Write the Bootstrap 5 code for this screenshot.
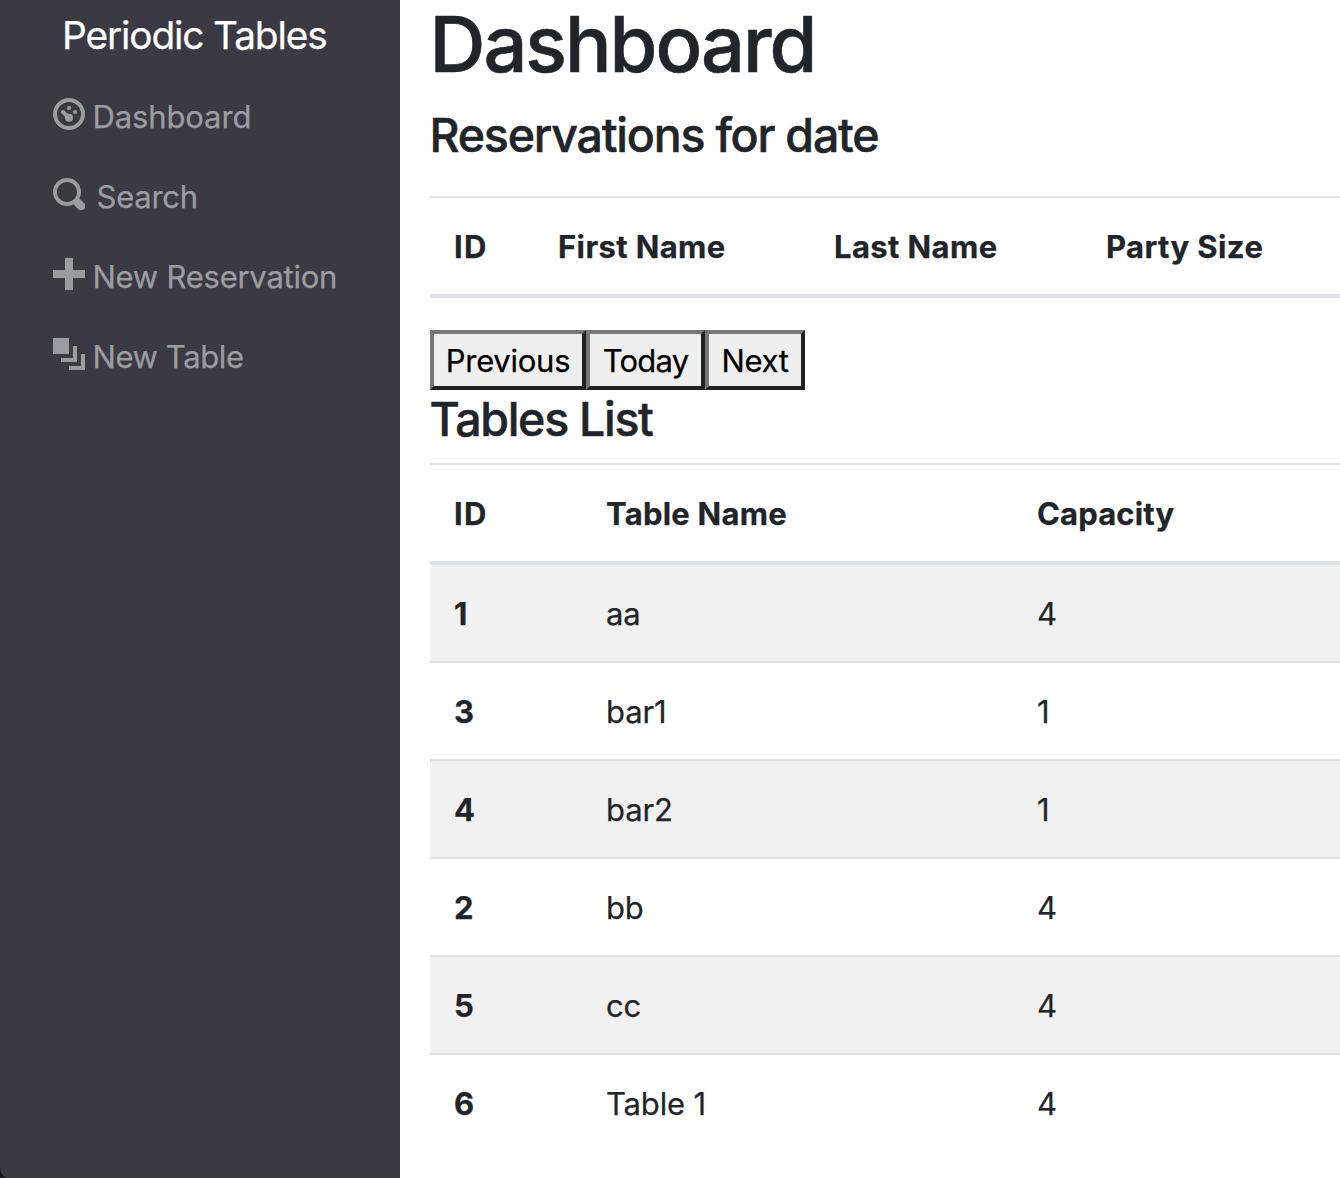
<!DOCTYPE html>
<html lang="en">
<head>
<meta charset="utf-8">
<meta name="viewport" content="width=device-width, initial-scale=1">
<title>Periodic Tables</title>
<link href="https://cdn.jsdelivr.net/npm/bootstrap@5.3.0/dist/css/bootstrap.min.css" rel="stylesheet">
<style>
html{font-size:32px}
body{font-family:Inter,"Liberation Sans",sans-serif;font-size:31px;line-height:48px;color:#212529;height:1178px;background:#fff;-webkit-text-stroke:.25px currentColor}
.side-wrap{width:400px;background:#151517}
.side-nav{background:#3b3a44;border-bottom-left-radius:7px 11px;height:1178px}
.brand-text{font-size:38.8px;line-height:60px;letter-spacing:-1.13px;padding:5px 0 0 62px;margin-bottom:1px;color:#fff;text-decoration:none;white-space:nowrap}
.side-links{padding:19px 0 0 52px}
.side-links .nav-link{height:80px;padding:8px 0 0;line-height:48px;color:#9b9ca1;white-space:nowrap;letter-spacing:-.25px;font-size:31px}
.side-links svg{width:32px;height:32px;flex:none;margin:5px 7px 0 .5px}
.side-links span{padding-left:1px}
.side-links .ls-dash{letter-spacing:-.12px}
.side-links .ls-search{letter-spacing:-.24px;padding-left:5px}
.side-links .ls-table{letter-spacing:-.4px}
.page{padding-left:30px;width:940px;height:1178px;overflow:hidden}
h1.title{font-size:77.5px;line-height:88px;font-weight:500;letter-spacing:-2.05px;margin:0 0 19px -.5px;-webkit-text-stroke:.6px currentColor}
h2.sub{font-size:46.5px;line-height:57.6px;font-weight:500;letter-spacing:-1.22px;margin:0 0 31.4px -.5px;-webkit-text-stroke:.5px currentColor}
h2.sub.list-title{letter-spacing:-1.3px;margin:0 0 14.4px -.5px;padding-top:1px}
.grid-table{border-collapse:separate;border-spacing:0;table-layout:fixed;width:1200px;margin:0 0 32px}
.grid-table th,.grid-table td{padding:25px 24px 23px;height:98px;border:0;border-top:2px solid #dee2e6;line-height:48px;box-shadow:none;white-space:nowrap;background:transparent}
.grid-table td{letter-spacing:-.15px}
.grid-table thead th{height:102px;border-bottom:4px solid #dee2e6;letter-spacing:.4px}
.grid-table tbody tr:first-child>*{border-top:0;height:96px}
.grid-table tbody tr:nth-child(odd)>*{background:#f1f1f1}
.grid-table thead th.ls-id{letter-spacing:1.2px}
.grid-table thead th.ls-name{letter-spacing:.24px}
.grid-table thead th.ls-cap{letter-spacing:.14px}
.raised{font-size:31px;line-height:48px;height:60px;padding:3px 0 1px;border:4px solid;border-color:#767676 #1f2121 #1f2121 #767676;background:#efefef;color:#000;text-align:center}
.raised.prev{width:156px;letter-spacing:-.25px}
.raised.today{width:119px;letter-spacing:-.8px}
.raised.next{width:100px;letter-spacing:-.3px}
</style>
</head>
<body class="overflow-hidden">
<div class="d-flex">
  <div class="side-wrap flex-shrink-0">
    <nav class="side-nav d-flex flex-column">
      <a class="brand-text d-block" href="#">Periodic Tables</a>
      <ul class="nav flex-column flex-nowrap side-links">
        <li class="nav-item"><a class="nav-link d-flex align-items-start" href="#">
          <svg viewBox="0 0 8 8" fill="currentColor" aria-hidden="true"><circle cx="4" cy="4" r="3.5" fill="none" stroke="currentColor"/><circle cx="4" cy="2.5" r=".5"/><circle cx="5.5" cy="3.5" r=".5"/><circle cx="4" cy="4.95" r="1"/><path d="M2.5 3.5L3.8 4.8" fill="none" stroke="currentColor" stroke-linecap="round"/></svg>
          <span class="ls-dash">Dashboard</span></a></li>
        <li class="nav-item"><a class="nav-link d-flex align-items-start" href="#">
          <svg viewBox="0 0 8 8" fill="currentColor" aria-hidden="true"><path d="M3.5 0c-1.93 0-3.5 1.57-3.5 3.5s1.57 3.5 3.5 3.5c.59 0 1.17-.14 1.66-.41a1 1 0 0 0 .13.13l1 1a1.02 1.02 0 1 0 1.44-1.44l-1-1a1 1 0 0 0-.16-.13c.27-.49.44-1.06.44-1.66 0-1.93-1.55-3.5-3.5-3.5zm0 1c1.39 0 2.5 1.11 2.5 2.5 0 .66-.24 1.27-.66 1.72-.01.01-.02.02-.03.03a1 1 0 0 0-.13.13c-.44.4-1.04.63-1.69.63-1.39 0-2.5-1.11-2.5-2.5s1.11-2.5 2.5-2.5z"/></svg>
          <span class="ls-search">Search</span></a></li>
        <li class="nav-item"><a class="nav-link d-flex align-items-start" href="#">
          <svg viewBox="0 0 8 8" fill="currentColor" aria-hidden="true"><path d="M3 0v3h-3v2h3v3h2v-3h3v-2h-3v-3h-2z"/></svg>
          <span>New Reservation</span></a></li>
        <li class="nav-item"><a class="nav-link d-flex align-items-start" href="#">
          <svg viewBox="0 0 8 8" fill="currentColor" aria-hidden="true"><path d="M0 0v4h4v-4h-4zm5 2v3h-3v1h4v-4h-1zm2 2v3h-3v1h4v-4h-1z"/></svg>
          <span class="ls-table">New Table</span></a></li>
      </ul>
    </nav>
  </div>
  <main class="page flex-shrink-0">
    <h1 class="title">Dashboard</h1>
    <h2 class="sub">Reservations for date</h2>
    <table class="table grid-table">
      <colgroup><col style="width:104px"><col style="width:276px"><col style="width:272px"><col></colgroup>
      <thead><tr><th class="ls-id">ID</th><th>First Name</th><th>Last Name</th><th>Party Size</th></tr></thead>
    </table>
    <div class="d-flex">
      <button class="raised prev" type="button">Previous</button>
      <button class="raised today" type="button">Today</button>
      <button class="raised next" type="button">Next</button>
    </div>
    <h2 class="sub list-title">Tables List</h2>
    <table class="table grid-table">
      <colgroup><col style="width:152px"><col style="width:431px"><col></colgroup>
      <thead><tr><th class="ls-id">ID</th><th class="ls-name">Table Name</th><th class="ls-cap">Capacity</th></tr></thead>
      <tbody>
        <tr><th>1</th><td>aa</td><td>4</td></tr>
        <tr><th>3</th><td>bar1</td><td>1</td></tr>
        <tr><th>4</th><td>bar2</td><td>1</td></tr>
        <tr><th>2</th><td>bb</td><td>4</td></tr>
        <tr><th>5</th><td>cc</td><td>4</td></tr>
        <tr><th>6</th><td>Table 1</td><td>4</td></tr>
      </tbody>
    </table>
  </main>
</div>
<script src="https://cdn.jsdelivr.net/npm/bootstrap@5.3.0/dist/js/bootstrap.bundle.min.js"></script>
</body>
</html>
